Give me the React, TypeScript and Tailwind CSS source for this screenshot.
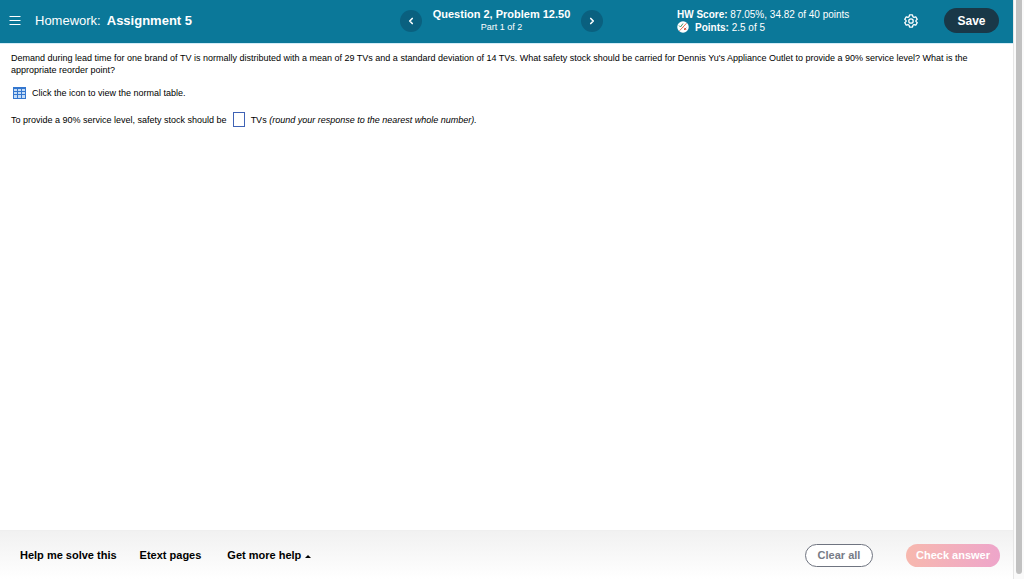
import React, { useState } from "react";
import { ChevronLeft, ChevronRight } from "lucide-react";

interface Score {
  percent: string;
  earned: string;
  total: number;
  points: string;
}

const score: Score = {
  percent: "87.05%",
  earned: "34.82",
  total: 40,
  points: "2.5 of 5",
};

function MenuIcon() {
  return (
    <svg viewBox="0 0 12 10" className="h-[10px] w-3" stroke="currentColor" strokeWidth="1">
      <path d="M.5 .5h11M.5 4.500h11M.5 8.500h11" />
    </svg>
  );
}

function GearIcon() {
  return (
    <svg viewBox="0 0 24 24" className="h-[14px] w-[14px]" fill="none" stroke="currentColor" strokeWidth="2.2" strokeLinejoin="round">
      <path d="M9.500 1.500h5l.8 3.200 1.800 1 3.100-.9 2.500 4.300-2.300 2.200v1.400l2.300 2.200-2.500 4.300-3.100-.9-1.800 1-.8 3.200h-5l-.8-3.200-1.800-1-3.100.9-2.500-4.300 2.300-2.200v-1.400L1.300 9.100l2.500-4.300 3.100.9 1.800-1z" />
      <circle cx="12" cy="12" r="3.800" />
    </svg>
  );
}

// Partial credit: green tick and red cross split by a slash
function PartialIcon() {
  return (
    <svg viewBox="0 0 24 24" className="h-3 w-3 shrink-0" fill="none" strokeWidth="2">
      <circle cx="12" cy="12" r="11.500" fill="#fff" />
      <path d="M5 19.500 19 4.500" stroke="#e0714f" />
      <path d="m4 9 3 3 5-7" stroke="#3f9a70" />
      <path d="m14 13.500 4.500 4.500m0-4.500L14 18" stroke="#d9583f" />
    </svg>
  );
}

function TableIcon() {
  return (
    <svg viewBox="0 0 13 12" className="h-3 w-[13px]" shapeRendering="crispEdges">
      <path fill="#3477cf" d="M0 0h13v12H0z" />
      <path fill="#c4dcf6" d="M1 2h3v2H1zM5 2h3v2H5zM9 2h3v2H9zM1 5h3v2H1zM5 5h3v2H5zM9 5h3v2H9zM1 8h3v3H1zM5 8h3v3H5zM9 8h3v3H9z" />
    </svg>
  );
}

function Header() {
  return (
    <header className="grid h-11 shrink-0 grid-cols-[400px_1fr_347px] items-center border-b border-[#d3edf8] bg-[#0b7899] pb-[2px] text-white">
      <div className="flex items-center pl-[9px]">
        <button aria-label="Open menu" className="mr-[14px]">
          <MenuIcon />
        </button>
        <h1 className="flex gap-[6px] text-[13px]">
          Homework: <strong className="font-bold">Assignment 5</strong>
        </h1>
      </div>

      <nav className="flex items-center" aria-label="Questions">
        <button aria-label="Previous question" className="flex h-[22px] w-[22px] items-center justify-center rounded-full bg-[#0a607f]">
          <ChevronLeft className="h-[10px] w-[10px]" strokeWidth={4} />
        </button>
        <div className="w-[159px] pb-[2px] text-center">
          <h2 className="text-[11px] leading-[14px] font-bold">Question 2, Problem 12.50</h2>
          <p className="text-[9px] leading-[12px]">Part 1 of 2</p>
        </div>
        <button aria-label="Next question" className="flex h-[22px] w-[22px] items-center justify-center rounded-full bg-[#0a607f]">
          <ChevronRight className="h-[10px] w-[10px]" strokeWidth={4} />
        </button>
      </nav>

      <div className="flex items-center justify-between pr-[14px] pl-[11px]">
        <div className="w-[200px] text-[10px] leading-[13px]">
          <p>
            <b>HW Score:</b> {score.percent}, {score.earned} of {score.total} points
          </p>
          <p className="flex items-center gap-[6px]">
            <PartialIcon />
            <span>
              <b>Points:</b> {score.points}
            </span>
          </p>
        </div>
        <div className="flex items-center gap-[26px]">
          <button aria-label="Settings">
            <GearIcon />
          </button>
          <button className="h-[25px] w-[55px] rounded-full bg-[#193848] text-[12px] font-bold">Save</button>
        </div>
      </div>
    </header>
  );
}

function Footer() {
  return (
    <footer className="flex h-[49px] shrink-0 items-center justify-between border-t border-[#efefef] bg-linear-to-b from-[#f1f1f1] to-white pr-[13px] pl-5 text-[11px] font-bold">
      <div className="flex items-center text-black">
        <button className="mr-[23px]">Help me solve this</button>
        <button className="mr-[26px]">Etext pages</button>
        <button className="flex items-center gap-1">
          Get more help
          <svg viewBox="0 0 6 3" className="mt-[2px] h-[3px] w-[6px]" fill="currentColor">
            <path d="M0 3 3 0l3 3z" />
          </svg>
        </button>
      </div>
      <div className="flex items-center gap-[33px]">
        <button className="h-[23px] w-[68px] rounded-full border border-[#6f7480] bg-white text-[#777b86]">Clear all</button>
        <button className="h-[23px] w-[94px] rounded-full bg-linear-to-r from-[#f7b8ae] to-[#eea5ca] whitespace-nowrap text-white">
          Check answer
        </button>
      </div>
    </footer>
  );
}

export default function App() {
  const [answer, setAnswer] = useState("");

  return (
    <div className="flex h-screen bg-white font-['Liberation_Sans',Arial,sans-serif]">
      <div className="flex min-w-0 flex-1 flex-col">
        <Header />

        <main className="flex-1 pt-2 pr-3 pl-[11px] text-[9px] leading-[12px] text-black">
          <p>
            Demand during lead time for one brand of TV is normally distributed with a mean of 29 TVs and a standard deviation of 14 TVs.
            What safety stock should be carried for Dennis Yu's Appliance Outlet to provide a 90% service level? What is the appropriate
            reorder point?
          </p>
          <div className="mt-[11px] flex items-center gap-[6px] pl-[2px]">
            <button aria-label="View the normal table">
              <TableIcon />
            </button>
            <span>Click the icon to view the normal table.</span>
          </div>
          <div className="mt-[13px] flex items-center gap-[6px]">
            <label htmlFor="safety-stock">To provide a 90% service level, safety stock should be</label>
            <input
              id="safety-stock"
              value={answer}
              onChange={(e) => setAnswer(e.target.value)}
              className="h-[15px] w-3 border border-[#3f62b5] bg-white text-center outline-none"
            />
            <span>
              TVs <i>(round your response to the nearest whole number).</i>
            </span>
          </div>
        </main>

        <Footer />
      </div>

      {/* Scrollbar track */}
      <div className="w-[11px] shrink-0 border-l border-[#e6e6e6] bg-[#fafafa] px-[2px] pb-[5px]">
        <div className="h-full w-[6px] rounded-b-full bg-[#c1c1c1]" />
      </div>
    </div>
  );
}
